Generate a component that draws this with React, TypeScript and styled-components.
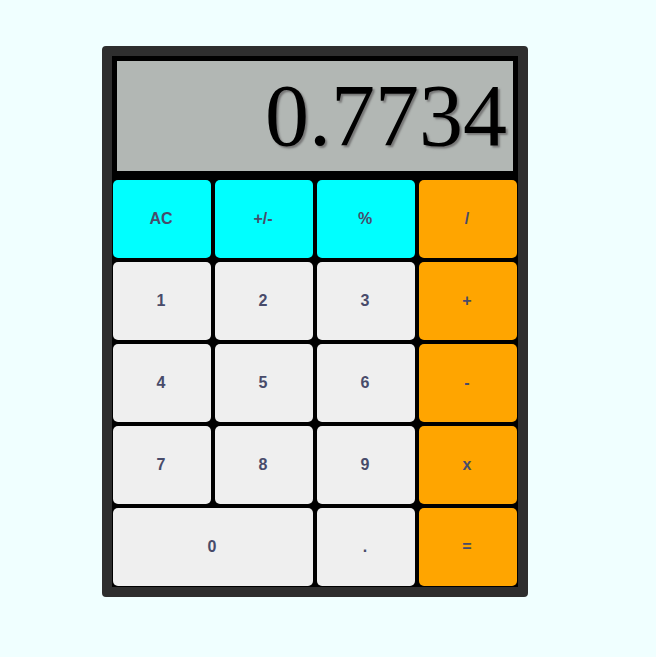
import React from "react";
import styled, { createGlobalStyle } from "styled-components";

const Global = createGlobalStyle`
  html, body { margin: 0; padding: 0; background: #f0ffff; }
  * { box-sizing: border-box; }
`;

const Page = styled.div`
  padding: 46px 0 0 102px;
`;

const Calculator = styled.div`
  width: 426px;
  border: 10px solid #2e2e2e;
  border-radius: 4px;
  background: #000;
`;

const Display = styled.div`
  height: 120px;
  border: 5px solid #000;
  background: #b2b7b4;
  display: flex;
  align-items: flex-end;
  justify-content: flex-end;
  padding: 0 6px 0 0;
  font-family: "Liberation Serif", "Times New Roman", serif;
  font-size: 88px;
  line-height: 1;
  color: #000;
  text-shadow: 2px 2px 2px #777;
  overflow: hidden;
`;

const Value = styled.span`
  display: block;
  margin-bottom: 11px;
`;

const Keys = styled.div`
  display: grid;
  grid-template-columns: repeat(4, 98px);
  grid-auto-rows: 78px;
  gap: 4px;
  padding: 4px 1px 1px;
`;

type Kind = "fn" | "op" | "num";

const colors: Record<Kind, string> = {
  fn: "#00ffff",
  op: "#ffa500",
  num: "#efefef",
};

const Key = styled.button<{ $kind: Kind; $wide?: boolean }>`
  border: none;
  border-radius: 5px;
  background: ${(p) => colors[p.$kind]};
  grid-column: ${(p) => (p.$wide ? "span 2" : "auto")};
  font-family: "Liberation Sans", Arial, sans-serif;
  font-weight: bold;
  font-size: 16px;
  color: #484b6a;
  padding: 0 2px 0 0;
  cursor: pointer;
`;

const keys: { label: string; kind: Kind; wide?: boolean }[] = [
  { label: "AC", kind: "fn" },
  { label: "+/-", kind: "fn" },
  { label: "%", kind: "fn" },
  { label: "/", kind: "op" },
  { label: "1", kind: "num" },
  { label: "2", kind: "num" },
  { label: "3", kind: "num" },
  { label: "+", kind: "op" },
  { label: "4", kind: "num" },
  { label: "5", kind: "num" },
  { label: "6", kind: "num" },
  { label: "-", kind: "op" },
  { label: "7", kind: "num" },
  { label: "8", kind: "num" },
  { label: "9", kind: "num" },
  { label: "x", kind: "op" },
  { label: "0", kind: "num", wide: true },
  { label: ".", kind: "num" },
  { label: "=", kind: "op" },
];

export default function App() {
  return (
    <Page>
      <Global />
      <Calculator>
        <Display>
          <Value>0.7734</Value>
        </Display>
        <Keys>
          {keys.map((k) => (
            <Key key={k.label} $kind={k.kind} $wide={k.wide}>
              {k.label}
            </Key>
          ))}
        </Keys>
      </Calculator>
    </Page>
  );
}
